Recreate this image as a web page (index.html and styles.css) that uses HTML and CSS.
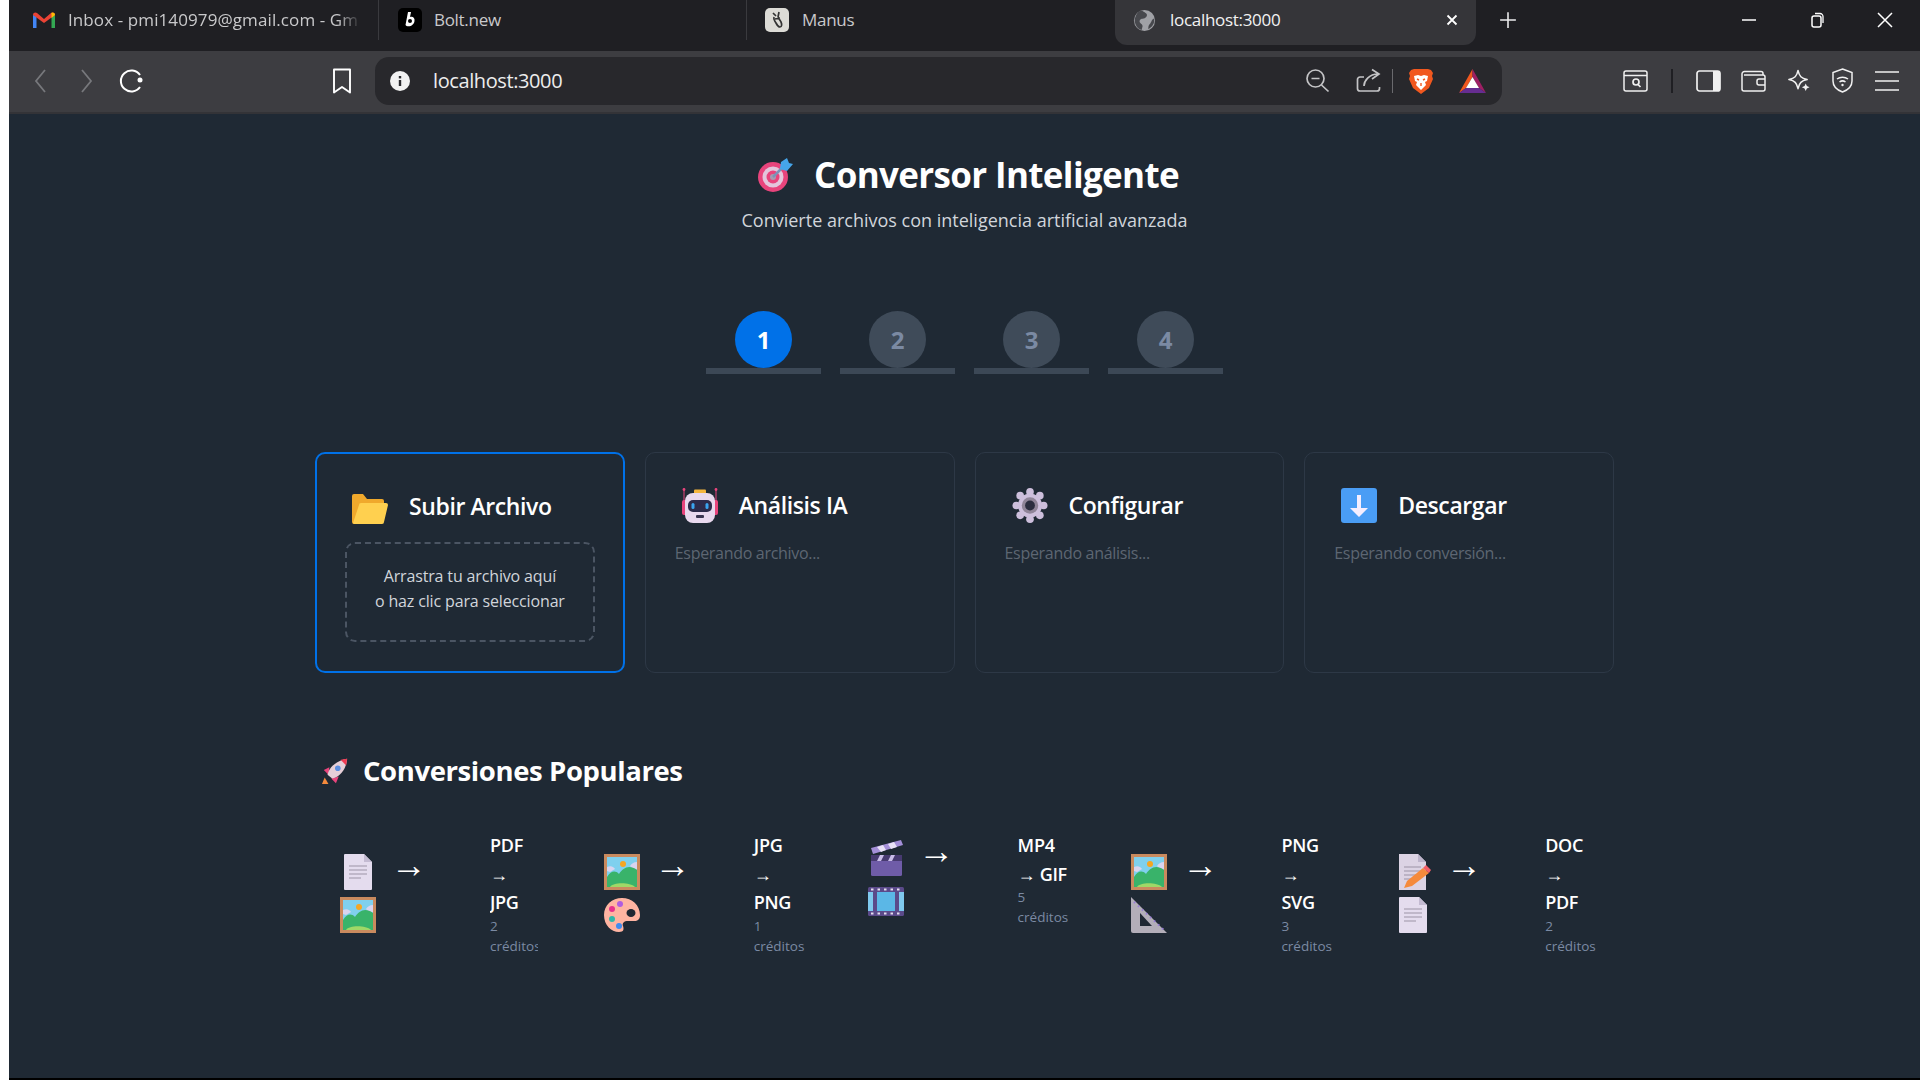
FILE: index.html
```html
<!DOCTYPE html>
<html lang="es">
<head>
    <meta charset="UTF-8">
    <title>Conversor Inteligente</title>
    <link rel="stylesheet" href="styles.css">
</head>
<body>
<div class="window">
    <div class="tabbar">
        <div class="tab tab-gmail">
            <svg class="favicon" viewBox="0 0 22 16"><path d="M0 16V3l3.500 1v12z" fill="#4285f4"/><path d="M18.500 16V4L22 3v13z" fill="#34a853"/><path d="M0 3c0-3 3-3 4-2l7 6 7-6c1-1 4-1 4 2l-11 8z" fill="#ea4335"/><path d="M18 1c1-1 4-1 4 2l-3.500 3V1.500z" fill="#fbbc04"/></svg>
            <span class="tab-title">Inbox - pmi140979@gmail.com - Gm</span>
        </div>
        <div class="tab tab-bolt">
            <svg class="favicon" viewBox="0 0 24 24"><rect width="24" height="24" rx="5" fill="#000"/><path d="M10 4h3l-1 5c3-1 5 1 4.500 4-.5 4-4 6-8 5l-1-1z" fill="#fff"/><circle cx="12" cy="13" r="2" fill="#000"/></svg>
            <span class="tab-title">Bolt.new</span>
        </div>
        <div class="tab tab-manus">
            <svg class="favicon" viewBox="0 0 24 24"><rect width="24" height="24" rx="5" fill="#dcdbd6"/><path d="M8 5l3 3M14 4l-1 5M9 9c-1 3 1 4 2 6s2 4 4 4 2-3 1-5-3-4-3-6M10 11l5-1" fill="none" stroke="#333" stroke-width="1.700"/></svg>
            <span class="tab-title">Manus</span>
        </div>
        <div class="tab tab-active">
            <svg class="favicon" viewBox="0 0 24 24"><circle cx="12" cy="12" r="11" fill="#a0a1a6"/><path d="M10 2c3 2 6 3 4 6s-6 1-7 4 3 3 3 6l-1 4C3 20 0 13 3 7s5-5 7-5zM22 10c1 5-2 9-6 11 0-3 0-4 2-6s1-4 4-5z" fill="#47484d"/></svg>
            <span class="tab-title">localhost:3000</span>
            <svg class="tab-close" viewBox="0 0 12 12"><path d="M1.500 1.500l9 9M10.500 1.500l-9 9" stroke="#fff" stroke-width="1.800"/></svg>
        </div>
        <svg class="new-tab" viewBox="0 0 16 16"><path d="M8 1v14M1 8h14" stroke="#ededee" stroke-width="1.400"/></svg>
        <div class="window-controls">
            <svg viewBox="0 0 16 16"><path d="M1 8h14" stroke="#fff" stroke-width="1.500"/></svg>
            <svg viewBox="0 0 16 16"><rect x="3" y="4" width="9" height="11" rx="2" fill="none" stroke="#fff" stroke-width="1.500"/><path d="M6 1.500h5a3 3 0 0 1 3 3V11" fill="none" stroke="#fff" stroke-width="1.300"/></svg>
            <svg viewBox="0 0 16 16"><path d="M1 1l14 14M15 1L1 15" stroke="#fff" stroke-width="1.500"/></svg>
        </div>
    </div>

    <div class="toolbar">
        <div class="nav-buttons">
            <svg class="nav-icon" viewBox="0 0 24 24"><path d="M15 1L6 12l9 11" fill="none" stroke="#77787c" stroke-width="1.800"/></svg>
            <svg class="nav-icon" viewBox="0 0 24 24"><path d="M8 1l9 11-9 11" fill="none" stroke="#77787c" stroke-width="1.800"/></svg>
            <svg class="nav-icon nav-reload" viewBox="0 0 24 24"><path d="M21 6A10.500 10.500 0 1 0 21 18" fill="none" stroke="#fff" stroke-width="2"/><circle cx="21" cy="11" r="2.500" fill="#fff"/></svg>
        </div>
        <svg class="bookmark" viewBox="0 0 20 26"><path d="M2 1.500h16v23l-8-5.500-8 5.500z" fill="none" stroke="#fff" stroke-width="1.900" stroke-linejoin="round"/></svg>
        <div class="address-bar">
            <svg class="info-icon" viewBox="0 0 20 20"><circle cx="10" cy="10" r="10" fill="#f2f2f2"/><rect x="8.800" y="9" width="2.400" height="6" fill="#2a2a2e"/><rect x="8.800" y="5" width="2.400" height="2.400" fill="#2a2a2e"/></svg>
            <span class="address-text">localhost:3000</span>
            <div class="address-actions">
                <svg class="zoom-out" viewBox="0 0 26 26"><circle cx="10.500" cy="10.500" r="8.500" fill="none" stroke="#c4c4c6" stroke-width="1.700"/><path d="M6.500 10.500h8M16.500 17l7 6.500" stroke="#c4c4c6" stroke-width="1.700"/></svg>
                <svg class="share" viewBox="0 0 26 26"><path d="M9 9H5a2.500 2.500 0 0 0-2.500 2.500v9A2.500 2.500 0 0 0 5 23h17a2.500 2.500 0 0 0 2.500-2.500V19" fill="none" stroke="#c4c4c6" stroke-width="1.700"/><path d="M9 18c0-5 5-12 14-12M17 1.500L24 6l-7 5" fill="none" stroke="#c4c4c6" stroke-width="1.700"/></svg>
                <span class="addr-divider"></span>
                <svg class="brave" viewBox="0 0 24 26"><path d="M5 1h14l3 1 2 3-1 3 1 3-4 9-8 6-8-6-4-9 1-3-1-3 2-3z" fill="#f1581f"/><path d="M5 8l4-1 3 1 3-1 4 1-1 5-2 1 1 3-5 5-5-5 1-3-2-1z" fill="#fff"/><path d="M8 11l2 1M16 11l-2 1M12 15v3" stroke="#f1581f" stroke-width="1.400"/></svg>
                <svg class="bat" viewBox="0 0 27 24"><path d="M13.500 0L0 24l7-5 6.500-11z" fill="#f1581f"/><path d="M13.500 0L27 24l-7-5-6.500-11z" fill="#9e1f63"/><path d="M0 24h27l-7-5H7z" fill="#662d91"/><path d="M13.500 8L20 19H7z" fill="#fff"/></svg>
            </div>
        </div>
        <div class="toolbar-right">
            <svg class="tool-icon" viewBox="0 0 25 22"><rect x="1" y="1" width="23" height="20" rx="2" fill="none" stroke="#f0f0f0" stroke-width="1.500"/><path d="M1 5.500h23" stroke="#f0f0f0" stroke-width="1.500"/><circle cx="13" cy="12" r="3" fill="none" stroke="#f0f0f0" stroke-width="1.700"/><path d="M15 14.500l2.500 2.500" stroke="#f0f0f0" stroke-width="1.700"/></svg>
            <span class="tool-divider"></span>
            <svg class="tool-icon" viewBox="0 0 25 22"><rect x="1" y="1" width="23" height="20" rx="2.500" fill="none" stroke="#f0f0f0" stroke-width="1.700"/><path d="M17 1h5a2 2 0 0 1 2 2v16a2 2 0 0 1-2 2h-5z" fill="#f0f0f0"/></svg>
            <svg class="tool-icon" viewBox="0 0 25 22"><path d="M1 4a2.500 2.500 0 0 1 2.500-2.500H20a2 2 0 0 1 2 2V5" fill="none" stroke="#f0f0f0" stroke-width="1.500"/><path d="M1 4v15a2 2 0 0 0 2 2h19a2 2 0 0 0 2-2V7a2 2 0 0 0-2-2H3" fill="none" stroke="#f0f0f0" stroke-width="1.500"/><path d="M24 9h-6a2 2 0 0 0-2 2v2a2 2 0 0 0 2 2h6" fill="none" stroke="#f0f0f0" stroke-width="1.500"/></svg>
            <svg class="tool-icon" viewBox="0 0 25 25"><path d="M12 1.500c1.200 6 3.500 8.300 9.500 9.500-6 1.200-8.300 3.500-9.500 9.500-1.200-6-3.500-8.300-9.500-9.500 6-1.200 8.300-3.500 9.500-9.500z" fill="none" stroke="#f0f0f0" stroke-width="1.600" stroke-linejoin="round"/><path d="M20 15l1.200 2.800L24 19l-2.800 1.200L20 23l-1.200-2.800L16 19l2.800-1.200z" fill="#f0f0f0"/></svg>
            <svg class="tool-icon shield" viewBox="0 0 21 25"><path d="M10.500 1L20 4.500V13c0 5-4 9-9.500 11C5 22 1 18 1 13V4.500z" fill="none" stroke="#f0f0f0" stroke-width="1.500"/><path d="M5 11c3-2.500 8-2.500 11 0M7.500 14c2-1.500 4-1.500 6 0" fill="none" stroke="#f0f0f0" stroke-width="1.500"/><circle cx="10.500" cy="17" r="1.200" fill="#f0f0f0"/></svg>
            <svg class="tool-icon menu-icon" viewBox="0 0 24 20"><path d="M0 1h24M0 10h24M0 19h24" stroke="#f0f0f0" stroke-width="1.700"/></svg>
        </div>
    </div>

    <main class="page">
        <header class="page-header">
            <h1 class="page-title">
                <svg class="title-icon" viewBox="0 0 36 36"><circle cx="16" cy="20" r="15" fill="#e8447c"/><circle cx="16" cy="20" r="10.500" fill="#e3c6dc"/><circle cx="16" cy="20" r="6.500" fill="#e8447c"/><circle cx="16" cy="20" r="3" fill="#a99ab0"/><path d="M16 20L27 9" stroke="#7a93b8" stroke-width="2.500"/><path d="M24 5l6-4 2 5 4 1-6 7-7-2z" fill="#45a5ea"/></svg>
                Conversor Inteligente
            </h1>
            <p class="page-subtitle">Convierte archivos con inteligencia artificial avanzada</p>
        </header>

        <div class="steps">
            <div class="step step-active"><span class="step-circle">1</span></div>
            <div class="step"><span class="step-circle">2</span></div>
            <div class="step"><span class="step-circle">3</span></div>
            <div class="step"><span class="step-circle">4</span></div>
        </div>

        <section class="cards">
            <div class="card card-active">
                <h3 class="card-title">
                    <svg class="card-icon" viewBox="0 0 36 35"><path d="M0 7a2 2 0 0 1 2-2h9l4 5h15a2 2 0 0 1 2 2v3L5 35H2a2 2 0 0 1-2-2z" fill="#f0a92c"/><path d="M9 14h25a2 2 0 0 1 2 2l-4 17a2 2 0 0 1-2 2H2a2 2 0 0 1-1-1l6-18a2 2 0 0 1 2-2z" fill="#ffd04f"/></svg>
                    Subir Archivo
                </h3>
                <div class="dropzone">Arrastra tu archivo aquí<br>o haz clic para seleccionar</div>
            </div>
            <div class="card">
                <h3 class="card-title">
                    <svg class="card-icon" viewBox="0 0 36 35"><path d="M2 1v24M34 1v24" stroke="#e8447c" stroke-width="1"/><circle cx="2" cy="1.500" r="1.400" fill="#e8447c"/><circle cx="34" cy="1.500" r="1.400" fill="#e8447c"/><rect x="12" y="1.500" width="12" height="5" rx="1" fill="#f4b63f"/><rect x="0" y="12" width="5" height="15" rx="2" fill="#e8447c"/><rect x="31" y="12" width="5" height="15" rx="2" fill="#e8447c"/><rect x="3" y="5" width="30" height="30" rx="8" fill="#e9d9ee"/><rect x="6" y="12" width="24" height="12" rx="5" fill="#2d2b4a"/><rect x="9.500" y="15" width="3" height="6" rx="1.500" fill="#3aa5f0"/><rect x="23.500" y="15" width="3" height="6" rx="1.500" fill="#3aa5f0"/><rect x="14" y="27" width="8" height="3" rx="1" fill="#3a3550"/></svg>
                    Análisis IA
                </h3>
                <p class="card-status">Esperando archivo...</p>
            </div>
            <div class="card">
                <h3 class="card-title">
                    <svg class="card-icon" viewBox="0 0 32 32"><g fill="#cdbfdc"><circle cx="16" cy="16" r="11"/><circle cx="16" cy="3.500" r="3.500"/><circle cx="16" cy="28.500" r="3.500"/><circle cx="3.500" cy="16" r="3.500"/><circle cx="28.500" cy="16" r="3.500"/><circle cx="7" cy="7" r="3.500"/><circle cx="25" cy="7" r="3.500"/><circle cx="7" cy="25" r="3.500"/><circle cx="25" cy="25" r="3.500"/></g><circle cx="16" cy="16" r="7.500" fill="#8f8498"/><circle cx="16" cy="16" r="4.500" fill="#2b2d3f"/></svg>
                    Configurar
                </h3>
                <p class="card-status">Esperando análisis...</p>
            </div>
            <div class="card">
                <h3 class="card-title">
                    <svg class="card-icon" viewBox="0 0 36 35"><rect width="36" height="35" rx="3" fill="#4a9df5"/><path d="M16 7h4v13h7l-9 9-9-9h7z" fill="#f5eeff"/></svg>
                    Descargar
                </h3>
                <p class="card-status">Esperando conversión...</p>
            </div>
        </section>

        <section class="popular">
            <h2 class="popular-title">
                <svg class="popular-icon" viewBox="0 0 30 30"><path d="M4 22l-3 7h7z" fill="#f58a3c"/><path d="M9 11l-6 3 5 5zM19 21l-3 7-5-5z" fill="#e8447c"/><path d="M7 19C9 10 17 4 28 2c-1 11-7 19-16 21z" fill="#e6cfd8"/><path d="M21 3l7-1-1 7z" fill="#ef3a52"/><circle cx="18" cy="12" r="3" fill="#5c8ee0"/></svg>
                Conversiones Populares
            </h2>
            <div class="conversions">
                <div class="conversion">
                    <div class="conv-icons">
                        <div class="emoji-line">
                            <svg class="file-icon" viewBox="0 0 36 36"><use href="#doc"/></svg><span class="arrow">→</span>
                        </div>
                        <svg class="file-icon" viewBox="0 0 36 36"><use href="#picture"/></svg>
                    </div>
                    <div class="conv-text conv-text-clip">
                        <div class="conv-name">PDF<br>→<br>JPG</div>
                        <div class="conv-cost">2<br>créditos</div>
                    </div>
                </div>
                <div class="conversion">
                    <div class="conv-icons">
                        <div class="emoji-line">
                            <svg class="file-icon" viewBox="0 0 36 36"><use href="#picture"/></svg><span class="arrow">→</span>
                        </div>
                        <svg class="file-icon" viewBox="0 0 36 36"><use href="#palette"/></svg>
                    </div>
                    <div class="conv-text">
                        <div class="conv-name">JPG<br>→<br>PNG</div>
                        <div class="conv-cost">1<br>créditos</div>
                    </div>
                </div>
                <div class="conversion">
                    <div class="conv-icons">
                        <div class="emoji-line">
                            <svg class="file-icon" viewBox="0 0 36 36"><use href="#clapper"/></svg><span class="arrow">→</span>
                        </div>
                        <svg class="file-icon" viewBox="0 0 36 36"><use href="#film"/></svg>
                    </div>
                    <div class="conv-text">
                        <div class="conv-name">MP4<br>→ GIF</div>
                        <div class="conv-cost">5<br>créditos</div>
                    </div>
                </div>
                <div class="conversion">
                    <div class="conv-icons">
                        <div class="emoji-line">
                            <svg class="file-icon" viewBox="0 0 36 36"><use href="#picture"/></svg><span class="arrow">→</span>
                        </div>
                        <svg class="file-icon" viewBox="0 0 36 36"><use href="#ruler"/></svg>
                    </div>
                    <div class="conv-text">
                        <div class="conv-name">PNG<br>→<br>SVG</div>
                        <div class="conv-cost">3<br>créditos</div>
                    </div>
                </div>
                <div class="conversion">
                    <div class="conv-icons">
                        <div class="emoji-line">
                            <svg class="file-icon" viewBox="0 0 36 36"><use href="#memo"/></svg><span class="arrow">→</span>
                        </div>
                        <svg class="file-icon" viewBox="0 0 36 36"><use href="#doc"/></svg>
                    </div>
                    <div class="conv-text">
                        <div class="conv-name">DOC<br>→<br>PDF</div>
                        <div class="conv-cost">2<br>créditos</div>
                    </div>
                </div>
            </div>
        </section>
    </main>
</div>

<!-- shared emoji drawings -->
<svg class="sprites" width="0" height="0">
    <symbol id="doc" viewBox="0 0 36 36">
        <path d="M4 1a1 1 0 0 1 1-1h19l8 8v27a1 1 0 0 1-1 1H5a1 1 0 0 1-1-1z" fill="#e4dcee"/><path d="M24 0l8 8h-8z" fill="#c4bbd2"/>
        <path d="M9 12h18M9 16h18M9 20h18M9 24h12" stroke="#9b94a6" stroke-width="1.200"/>
    </symbol>
    <symbol id="picture" viewBox="0 0 36 36">
        <rect x="0" y="0" width="36" height="36" fill="#c98a5e"/><rect x="3" y="3" width="30" height="30" fill="#7fd0ee"/>
        <circle cx="19" cy="10" r="3" fill="#f5a623"/>
        <path d="M3 13c4-2 7 0 8 2l-5 3-3-1zM33 8c-3 0-6 2-7 4l4 4 3-1z" fill="#d8d4f0"/>
        <path d="M3 23c4-6 8-7 12-3 4-6 10-10 18-4v17H3z" fill="#39b36a"/><path d="M6 33c3-5 20-5 25 0z" fill="#9fd867"/>
    </symbol>
    <symbol id="palette" viewBox="0 0 36 36">
        <path d="M18 1C8 1 0 8 0 18s7 17 15 17c5 0 5-3 4-6s1-5 5-5h6c4 0 6-2 6-6C36 8 28 1 18 1z" fill="#ffb4a2"/>
        <ellipse cx="27" cy="16" rx="4.500" ry="4" fill="#1f2733"/>
        <circle cx="16" cy="7" r="3" fill="#b05ce0"/><circle cx="8" cy="12" r="3" fill="#e8318c"/><circle cx="8" cy="22" r="3" fill="#2fb8a8"/><circle cx="15" cy="29" r="3" fill="#3f8cf0"/>
    </symbol>
    <symbol id="clapper" viewBox="0 0 36 36">
        <path d="M3 8L33 0l2 5L5 14z" fill="#a48fd8"/><path d="M9 7l6-2 3 5-5 2zM20 4l6-2 3 5-6 2z" fill="#e9e2f7"/>
        <rect x="3" y="15" width="31" height="21" rx="1.500" fill="#6f5ca8"/><rect x="3" y="15" width="31" height="6" fill="#473a70"/>
        <path d="M9 21l3-6h4l-3 6zM20 21l3-6h4l-3 6z" fill="#c9bde8"/>
    </symbol>
    <symbol id="film" viewBox="0 0 36 36">
        <rect x="0" y="4" width="36" height="29" rx="1.500" fill="#5b4a8a"/><rect x="9" y="9" width="18" height="19" fill="#5bb7e6"/>
        <rect x="0" y="9" width="5" height="19" fill="#7fc9ee"/><rect x="31" y="9" width="5" height="19" fill="#7fc9ee"/>
        <path d="M3 6.500h30M3 30.500h30" stroke="#e4dcee" stroke-width="2" stroke-dasharray="2.500 4"/>
    </symbol>
    <symbol id="ruler" viewBox="0 0 36 36">
        <path d="M0 0l36 36H2a2 2 0 0 1-2-2z" fill="#b3aeb9"/><path d="M9 16l12 13H9z" fill="#1f2733"/>
        <path d="M3 5l32 30" stroke="#9a7fd8" stroke-width="2" stroke-dasharray="1.500 4" fill="none"/>
    </symbol>
    <symbol id="memo" viewBox="0 0 36 36">
        <path d="M4 0h19l8 8v28H4z" fill="#dcd3e4"/><path d="M23 0l8 8h-8z" fill="#bdb4cb"/>
        <path d="M9 13h17M9 17h17M9 21h13M9 25h8" stroke="#9b94a6" stroke-width="1.200"/>
        <path d="M9 34l3-7L28 14l6 5-17 13z" fill="#f58a3c"/><path d="M28 14l3-3 5 5-2 3z" fill="#f4606a"/>
    </symbol>
</svg>
</body>
</html>
```

FILE: styles.css
```css
* {
    box-sizing: border-box;
}

html, body {
    margin: 0;
    padding: 0;
    height: 100%;
    overflow: hidden;
}

body {
    background-color: #fff;
    font-family: "Open Sans", "Noto Sans", Arial, sans-serif;
    color: #fff;
}

.window {
    margin-left: 9px;
    height: 1080px;
    display: flex;
    flex-direction: column;
    background-color: #1f2934;
    border-bottom: 2px solid #000;
}

.sprites {
    display: none;
}

/* browser tabs */
.tabbar {
    height: 51px;
    flex-shrink: 0;
    display: flex;
    align-items: flex-start;
    background-color: #1f1f23;
    font-size: 17px;
    color: #c9c9cb;
    letter-spacing: -0.3px;
}

.tab {
    height: 40px;
    display: flex;
    align-items: center;
    white-space: nowrap;
}

.tab-title {
    margin-bottom: 2px;
}

.tab-gmail {
    width: 361px;
    margin-left: 8px;
    padding-left: 16px;
    gap: 13px;
}

.tab-gmail .tab-title {
    width: 293px;
    overflow: hidden;
    letter-spacing: 0.1px;
    -webkit-mask-image: linear-gradient(to right, #000 92%, transparent);
    mask-image: linear-gradient(to right, #000 92%, transparent);
}

.tab-bolt {
    width: 368px;
    border-left: 1px solid #3a3a3e;
    padding-left: 19px;
    gap: 12px;
}

.tab-manus {
    width: 369px;
    border-left: 1px solid #3a3a3e;
    padding-left: 18px;
    gap: 13px;
}

.tab-active {
    width: 361px;
    height: 45px;
    padding: 0 18px 5px 18px;
    gap: 14px;
    border-radius: 0 0 12px 12px;
    background-color: #353539;
    color: #f2f2f2;
}

.favicon {
    width: 24px;
    height: 24px;
    flex-shrink: 0;
}

.tab-gmail .favicon {
    width: 22px;
    height: 16px;
}

.tab-active .favicon {
    width: 23px;
    height: 23px;
}

.tab-close {
    width: 12px;
    height: 12px;
    margin-left: auto;
}

.new-tab {
    width: 18px;
    height: 18px;
    margin: 11px 0 0 23px;
}

.window-controls {
    margin-left: auto;
    display: flex;
    gap: 52px;
    padding: 12px 27px 0 0;
}

.window-controls svg {
    width: 16px;
    height: 16px;
}

/* address bar row */
.toolbar {
    height: 63px;
    flex-shrink: 0;
    display: flex;
    align-items: center;
    padding-bottom: 2px;
    background-color: #3d3d41;
    border-bottom: 2px solid #333337;
}

.nav-buttons {
    display: flex;
    gap: 20px;
    margin-left: 21px;
}

.nav-icon {
    width: 24px;
    height: 24px;
}

.nav-reload {
    margin-left: 1px;
}

.bookmark {
    width: 20px;
    height: 26px;
    margin-left: 189px;
}

.address-bar {
    width: 1127px;
    height: 48px;
    margin-left: 23px;
    display: flex;
    align-items: center;
    padding: 0 16px 0 15px;
    border-radius: 14px;
    background-color: #28282c;
}

.info-icon {
    width: 20px;
    height: 20px;
}

.address-text {
    margin-left: 23px;
    font-size: 20px;
    letter-spacing: -0.4px;
    color: #ededed;
}

.address-actions {
    margin-left: auto;
    display: flex;
    align-items: center;
}

.zoom-out, .share {
    width: 26px;
    height: 26px;
}

.share {
    margin-left: 24px;
}

.addr-divider {
    width: 1px;
    height: 24px;
    margin-left: 11px;
    background-color: #6a6a6e;
}

.brave {
    width: 24px;
    height: 26px;
    margin-left: 16px;
}

.bat {
    width: 27px;
    height: 24px;
    margin-left: 26px;
}

.toolbar-right {
    margin-left: 121px;
    display: flex;
    align-items: center;
    gap: 20px;
}

.tool-icon {
    width: 25px;
    height: 24px;
}

.shield {
    width: 21px;
    height: 25px;
    margin: 0 2px 0 1px;
}

.menu-icon {
    width: 24px;
    height: 20px;
}

.tool-divider {
    width: 2px;
    height: 24px;
    margin: 0 3px;
    background-color: #1f1f23;
}

/* page content */
.page {
    flex: 1;
    width: 1299px;
    margin-left: 306px;
    display: flex;
    flex-direction: column;
}

.page-header {
    text-align: center;
    padding-top: 39px;
}

.page-title {
    margin: 0;
    padding-left: 7px;
    font-size: 35px;
    line-height: 44px;
    font-weight: 700;
    letter-spacing: -0.65px;
    display: flex;
    justify-content: center;
    align-items: center;
    gap: 21px;
}

.title-icon {
    width: 36px;
    height: 36px;
}

.page-subtitle {
    margin: 11px 0 0;
    font-size: 18px;
    line-height: 24px;
    color: #d1d5db;
}

.steps {
    display: flex;
    justify-content: center;
    gap: 19px;
    margin-top: 79px;
}

.step {
    width: 115px;
    height: 63px;
    display: flex;
    justify-content: center;
    border-bottom: 6px solid #3c4856;
}

.step-circle {
    width: 57px;
    height: 57px;
    border-radius: 50%;
    display: flex;
    align-items: center;
    justify-content: center;
    font-size: 24px;
    font-weight: 700;
    background-color: #3f4b59;
    color: #7b8aa3;
}

.step-active .step-circle {
    background-color: #0071e8;
    color: #fff;
}

.cards {
    display: grid;
    grid-template-columns: repeat(4, 1fr);
    gap: 20px;
    margin-top: 78px;
}

.card {
    height: 221px;
    padding: 35px 29px;
    border: 1px solid #2d3846;
    border-radius: 10px;
}

.card-active {
    border: 2px solid #0071e8;
    padding: 35px 28px;
}

.card-title {
    margin: 0;
    padding-left: 7px;
    font-size: 23px;
    line-height: 35px;
    font-weight: 600;
    letter-spacing: -0.4px;
    display: flex;
    align-items: center;
    gap: 21px;
}

.card-icon {
    width: 36px;
    height: 35px;
}

.card-status {
    margin: 19px 0 0;
    font-size: 16px;
    line-height: 22px;
    color: #5d6672;
    letter-spacing: -0.3px;
}

.dropzone {
    margin-top: 18px;
    height: 100px;
    text-align: center;
    padding-top: 20px;
    border: 2px dashed #4b5563;
    border-radius: 10px;
    font-size: 16px;
    line-height: 25px;
    color: #d1d5db;
    letter-spacing: -0.15px;
}

.popular {
    margin-top: 80px;
}

.popular-title {
    margin: 0;
    padding-left: 6px;
    font-size: 27.500px;
    line-height: 36px;
    font-weight: 700;
    letter-spacing: -0.4px;
    display: flex;
    align-items: center;
    gap: 14px;
}

.popular-icon {
    width: 28px;
    height: 30px;
}

.conversions {
    display: grid;
    grid-template-columns: repeat(5, 1fr);
    gap: 20px;
    align-items: start;
    margin-top: 42px;
}

.conversion {
    display: flex;
    align-items: center;
    padding-left: 25px;
}

.conv-icons {
    width: 150px;
    flex-shrink: 0;
    display: flex;
    flex-direction: column;
    gap: 7px;
}

.emoji-line {
    display: flex;
    align-items: center;
    gap: 15px;
    height: 36px;
}

.arrow {
    margin-bottom: 16px;
    font-size: 36px;
    line-height: 36px;
}

.file-icon {
    width: 36px;
    height: 36px;
    display: block;
    flex-shrink: 0;
}

.conv-text-clip {
    width: 48px;
    overflow: hidden;
}

.conv-name {
    font-size: 18px;
    line-height: 28.500px;
    font-weight: 600;
    letter-spacing: -0.3px;
}

.conv-cost {
    margin-top: -1px;
    font-size: 13.500px;
    line-height: 20px;
    color: #7b8aa3;
    white-space: nowrap;
}
```
